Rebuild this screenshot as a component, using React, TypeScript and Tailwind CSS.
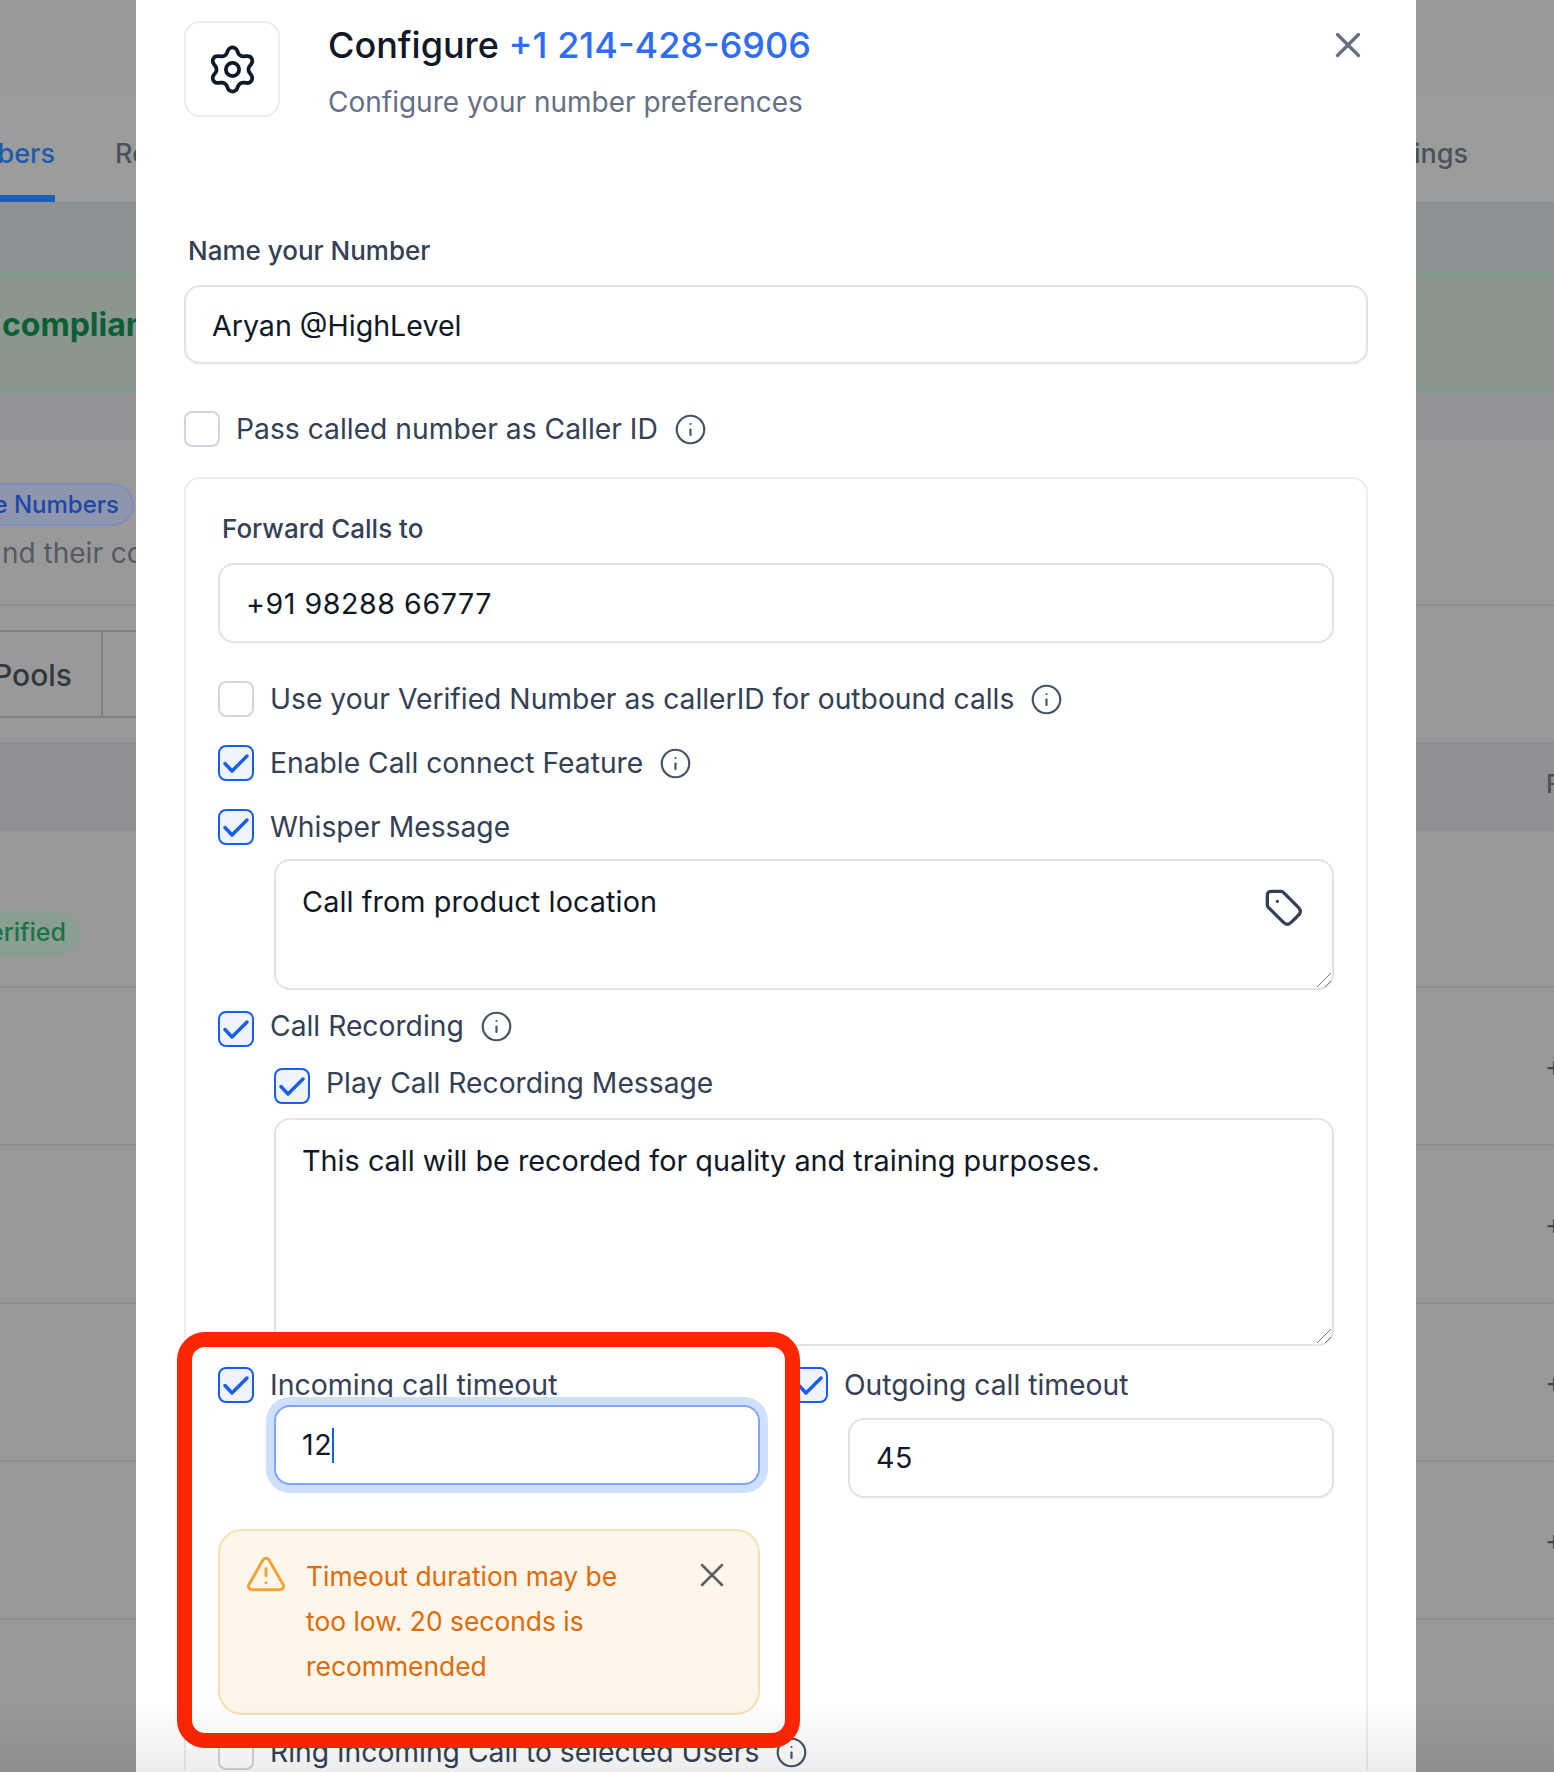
import React from "react";
import { Info, X, TriangleAlert } from "lucide-react";

const GEAR =
  "M9.3951 19.3711L9.97955 20.6856C10.1533 21.0768 10.4368 21.4093 10.7958 21.6426C11.1547 21.8759 11.5737 22.0001 12.0018 22C12.4299 22.0001 12.8488 21.8759 13.2078 21.6426C13.5667 21.4093 13.8503 21.0768 14.024 20.6856L14.6084 19.3711C14.8165 18.9047 15.1664 18.5159 15.6084 18.26C16.0532 18.0034 16.5678 17.8941 17.0784 17.9478L18.5084 18.1C18.9341 18.145 19.3637 18.0656 19.7451 17.8713C20.1265 17.6771 20.4434 17.3763 20.6573 17.0056C20.8715 16.635 20.9735 16.2103 20.9511 15.7829C20.9286 15.3555 20.7825 14.9438 20.5307 14.5978L19.684 13.4344C19.3825 13.0171 19.2214 12.5148 19.224 12C19.2239 11.4866 19.3865 10.9864 19.6884 10.5711L20.5351 9.40778C20.787 9.06175 20.933 8.65007 20.9555 8.22267C20.978 7.79528 20.8759 7.37054 20.6618 7C20.4479 6.62923 20.131 6.32849 19.7496 6.13423C19.3681 5.93997 18.9386 5.86053 18.5129 5.90556L17.0829 6.05778C16.5722 6.11141 16.0577 6.00212 15.6129 5.74556C15.17 5.48825 14.82 5.09736 14.6129 4.62889L14.024 3.31444C13.8503 2.92317 13.5667 2.59072 13.2078 2.3574C12.8488 2.12408 12.4299 1.99993 12.0018 2C11.5737 1.99993 11.1547 2.12408 10.7958 2.3574C10.4368 2.59072 10.1533 2.92317 9.97955 3.31444L9.3951 4.62889C9.18803 5.09736 8.83798 5.48825 8.3951 5.74556C7.95032 6.00212 7.43577 6.11141 6.9251 6.05778L5.49066 5.90556C5.06499 5.86053 4.6354 5.93997 4.25397 6.13423C3.87255 6.32849 3.55567 6.62923 3.34177 7C3.12766 7.37054 3.02562 7.79528 3.04803 8.22267C3.07045 8.65007 3.21652 9.06175 3.46844 9.40778L4.3151 10.5711C4.61704 10.9864 4.77964 11.4866 4.77955 12C4.77964 12.5134 4.61704 13.0137 4.3151 13.4289L3.46844 14.5922C3.21652 14.9382 3.07045 15.3499 3.04803 15.7773C3.02562 16.2047 3.12766 16.6295 3.34177 17C3.55589 17.3706 3.8728 17.6712 4.25417 17.8654C4.63554 18.0596 5.06502 18.1392 5.49066 18.0944L6.92066 17.9422C7.43133 17.8886 7.94587 17.9979 8.39066 18.2544C8.83519 18.511 9.18687 18.902 9.3951 19.3711Z";
const TAG =
  "M8 8H8.01M2 5.2L2 9.67C2 10.16 2 10.4 2.055 10.63C2.104 10.84 2.185 11.03 2.295 11.21C2.419 11.41 2.592 11.59 2.938 11.93L10.605 19.6C11.793 20.79 12.387 21.38 13.072 21.6C13.674 21.8 14.323 21.8 14.926 21.6C15.611 21.38 16.205 20.79 17.393 19.6L19.607 17.39C20.795 16.2 21.389 15.61 21.612 14.93C21.807 14.32 21.807 13.67 21.612 13.07C21.389 12.39 20.795 11.79 19.607 10.61L11.938 2.94C11.592 2.59 11.419 2.42 11.217 2.3C11.038 2.19 10.843 2.1 10.639 2.06C10.409 2 10.165 2 9.675 2H5.2C4.08 2 3.52 2 3.092 2.22C2.716 2.41 2.41 2.72 2.218 3.09C2 3.52 2 4.08 2 5.2Z";

function Box({ on = false }: { on?: boolean }) {
  return on ? (
    <span className="flex h-[36px] w-[36px] shrink-0 items-center justify-center rounded-[8px] border-2 border-[#155eef] bg-[#f0f3fb]">
      <svg width="26" height="19" viewBox="0 0 26 19" fill="none" stroke="#155eef" strokeWidth="3.4" strokeLinecap="round" strokeLinejoin="round">
        <path d="M2 9.5L9 17L24 2" />
      </svg>
    </span>
  ) : (
    <span className="block h-[36px] w-[36px] shrink-0 rounded-[8px] border-2 border-[#d0d5dd] bg-white" />
  );
}

function Tip() {
  return <Info size={33} strokeWidth={1.6} className="ml-[16px] shrink-0 text-[#475467]" />;
}

function Check({ on, label, tip, lift }: { on?: boolean; label: string; tip?: boolean; lift?: boolean }) {
  return (
    <div className="flex h-[36px] items-start">
      <Box on={on} />
      <div className={lift ? "ml-[16px] flex h-[36px] -translate-y-[3px] items-center" : "ml-[16px] flex h-[36px] items-center"}>
        <span className="whitespace-nowrap text-[28.25px] leading-[36px] text-[#344054]">{label}</span>
        {tip ? <Tip /> : null}
      </div>
    </div>
  );
}

function Field({ value, className }: { value: string; className: string }) {
  return (
    <div className={"flex items-center rounded-[16px] border-2 border-[#e2e3e8] bg-white pl-[26px] text-[28.6px] text-[#101828] shadow-[0_1px_2px_rgba(16,24,40,0.05)] " + className}>
      {value}
    </div>
  );
}

function Area({ value, className, icon }: { value: string; className: string; icon?: boolean }) {
  return (
    <div className={"relative rounded-[16px] border-2 border-[#e2e3e8] bg-white pl-[26px] pt-[23px] text-[28.8px] leading-[36px] text-[#101828] " + className}>
      {value}
      {icon ? (
        <svg width="40" height="40" viewBox="0 0 24 24" fill="none" stroke="#344054" strokeWidth="2" strokeLinecap="round" strokeLinejoin="round" className="absolute right-[28px] top-[27px]">
          <path d={TAG} />
        </svg>
      ) : null}
      <svg width="16" height="16" viewBox="0 0 16 16" fill="none" stroke="#777" strokeWidth="1" className="absolute bottom-0 right-0">
        <path d="M1 15L15 1M9 15L15 9" />
      </svg>
    </div>
  );
}

function Band({ h, className = "", children }: { h: string; className?: string; children?: React.ReactNode }) {
  return <div className={"relative overflow-hidden whitespace-nowrap " + h + " " + className}>{children}</div>;
}

const line = "border-b-[2px] border-[#8c8d90]";

function LeftStrip() {
  return (
    <div className="w-[136px] shrink-0 overflow-hidden bg-[#999999] text-[#4a4f57]">
      <Band h="h-[96px]" className="bg-[#999999] shadow-[0_2px_4px_rgba(0,0,0,0.12)]" />
      <Band h="h-[106px]" className="flex items-start bg-[#9c9c9c]">
        <div className="flex h-full w-[55px] shrink-0 flex-col items-end justify-between border-b-[7px] border-[#1b5fb4] pt-[40px]">
          <span className="text-[27px] font-medium leading-[36px] text-[#1c5cab]">bers</span>
        </div>
        <span className="ml-[60px] pt-[40px] text-[27px] font-medium leading-[36px] text-[#4b5158]">Re</span>
      </Band>
      <Band h="h-[72px]" className="bg-[#8f9294]" />
      <Band h="h-[117px]" className="flex items-start border-y-2 border-[#6fa283] bg-[#8b968f] pl-[2px] pt-[29px]">
        <span className="text-[32px] font-bold leading-[40px] text-[#0b5e35]">compliance</span>
      </Band>
      <Band h="h-[49px]" className="bg-[#929396]" />
      <Band h="h-[166px]" className={line + " bg-[#999999]"}>
        <div className="flex justify-end pr-[2px] pt-[43px]">
          <span className="flex h-[43px] items-center rounded-r-full border-2 border-l-0 border-[#7f8eb8] bg-[#8e96ae] pr-[13px] text-[24px] font-medium text-[#1d46a6]">
            e Numbers
          </span>
        </div>
        <div className="absolute left-[2px] top-[95px] text-[28px] leading-[36px] text-[#555a61]">nd their company</div>
      </Band>
      <Band h="h-[26px]" className="border-b-[2px] border-[#7f8083] bg-[#999999]" />
      <Band h="h-[86px]" className="flex items-center border-b-[2px] border-[#7f8083] bg-[#999999]">
        <div className="flex h-full w-[103px] items-center justify-end border-r-[2px] border-[#7f8083] pr-[29px] pt-[3px] text-[30px] font-medium text-[#33383f]">
          Pools
        </div>
      </Band>
      <Band h="h-[26px]" className={line + " bg-[#999999]"} />
      <Band h="h-[86px]" className={line + " bg-[#909194]"} />
      <Band h="h-[158px]" className={line + " bg-[#999999]"}>
        <div className="mt-[81px] flex h-[44px] w-[81px] items-center justify-end rounded-r-full bg-[#8a9f92] pr-[15px] text-[25px] font-medium text-[#1a7446]">
          erified
        </div>
      </Band>
      <Band h="h-[158px]" className={line} />
      <Band h="h-[158px]" className={line} />
      <Band h="h-[158px]" className={line} />
      <Band h="h-[158px]" className={line} />
      <Band h="h-[152px]" />
    </div>
  );
}

function Plus() {
  return <div className="ml-[129px] flex h-full items-center text-[28px] text-[#3a4453]">+</div>;
}

function RightStrip() {
  return (
    <div className="w-[138px] shrink-0 overflow-hidden bg-[#999999] text-[#4a4f57]">
      <Band h="h-[96px]" className="bg-[#999999] shadow-[0_2px_4px_rgba(0,0,0,0.12)]" />
      <Band h="h-[106px]" className="bg-[#9c9c9c]">
        <span className="absolute right-[86px] top-[40px] text-[27px] font-medium leading-[36px] text-[#4b5158]">Settings</span>
      </Band>
      <Band h="h-[72px]" className="bg-[#8f9294]" />
      <Band h="h-[117px]" className="border-y-2 border-[#6fa283] bg-[#8b968f]" />
      <Band h="h-[49px]" className="bg-[#929396]" />
      <Band h="h-[166px]" className={line} />
      <Band h="h-[138px]" className={line} />
      <Band h="h-[86px]" className={line + " bg-[#909194]"}>
        <span className="absolute left-[130px] top-[22px] text-[25px] font-medium text-[#4b5158]">Fo</span>
      </Band>
      <Band h="h-[158px]" className={line} />
      <Band h="h-[158px]" className={line}><Plus /></Band>
      <Band h="h-[158px]" className={line}><Plus /></Band>
      <Band h="h-[158px]" className={line}><Plus /></Band>
      <Band h="h-[158px]" className={line}><Plus /></Band>
      <Band h="h-[152px]" />
    </div>
  );
}

function Annotation() {
  return (
    <div className="absolute left-[41px] top-[1332px] h-[416px] w-[623px] rounded-[28px] border-[15px] border-[#ff2600] bg-white pl-[26px] pt-[20px]">
      <div className="flex h-[36px] items-start">
        <Box on />
        <div className="ml-[16px] h-[30px] overflow-hidden whitespace-nowrap text-[28.5px] leading-[36px] text-[#344054]">Incoming call timeout</div>
      </div>
      <div className="-mt-[6px] ml-[48px] w-[502px] rounded-[24px] bg-[#cfdffe] p-[8px]">
        <div className="flex h-[80px] items-center rounded-[16px] border-2 border-[#7ea6f8] bg-white pl-[26px] text-[28.6px] tracking-[0.5px] text-[#101828]">
          12<span className="h-[35px] w-[2px] bg-[#155eef]" />
        </div>
      </div>
      <div className="mt-[36px] flex h-[186px] w-[542px] rounded-[24px] border-2 border-[#f8dfb2] bg-[#fdf6ec] pl-[26px] pt-[22px]">
        <TriangleAlert size={42} strokeWidth={1.7} className="-ml-[1px] shrink-0 text-[#f2a332]" />
        <div className="ml-[19px] w-[345px] pt-[1px] text-[26.4px] leading-[45px] text-[#e06a06]">
          Timeout duration may be too low. 20 seconds is recommended
        </div>
        <X size={40} strokeWidth={1.5} className="ml-[41px] mt-[2px] shrink-0 text-[#5f5f5f]" />
      </div>
    </div>
  );
}

function Modal() {
  return (
    <div className="relative h-[1772px] w-[1280px] shrink-0 overflow-hidden bg-white px-[48px]">
      <div className="flex items-start pt-[21px]">
        <div className="flex h-[96px] w-[96px] shrink-0 items-center justify-center rounded-[16px] border-2 border-[#eaecf0] bg-white">
          <svg width="53" height="53" viewBox="0 0 24 24" fill="none" stroke="#101828" strokeWidth="1.7" strokeLinecap="round" strokeLinejoin="round">
            <path d={GEAR} />
            <circle cx="12" cy="12" r="3" />
          </svg>
        </div>
        <div className="ml-[48px] grow">
          <div className="mt-[2px] text-[36px] font-medium leading-[44px] text-[#101828]">
            Configure <span className="text-[#2f6df6]">+1 214-428-6906</span>
          </div>
          <div className="mt-[17px] text-[28px] leading-[36px] text-[#667085]">Configure your number preferences</div>
        </div>
        <X size={42} strokeWidth={1.9} className="mr-[-1px] mt-[3px] text-[#667085]" />
      </div>

      <div className="ml-[4px] mt-[113px] text-[26px] font-medium leading-[36px] text-[#344054]">Name your Number</div>
      <Field value="Aryan @HighLevel" className="mt-[16px] h-[79px] pt-[3px]" />
      <div className="mt-[47px]">
        <Check label="Pass called number as Caller ID" tip />
      </div>

      <div className="mt-[30px] rounded-t-[16px] border-2 border-b-0 border-[#eaecf0] px-[32px] pt-[32px]">
        <div className="ml-[4px] text-[26px] font-medium leading-[36px] text-[#344054]">Forward Calls to</div>
        <Field value="+91 98288 66777" className="mt-[16px] h-[80px] pt-[2px] tracking-[0.55px]" />
        <div className="mt-[38px]"><Check label="Use your Verified Number as callerID for outbound calls" tip /></div>
        <div className="mt-[28px]"><Check on label="Enable Call connect Feature" tip /></div>
        <div className="mt-[28px]"><Check on label="Whisper Message" /></div>
        <div className="ml-[56px] mt-[14px]">
          <Area value="Call from product location" icon className="h-[131px] tracking-[0.1px]" />
        </div>
        <div className="mt-[21px]"><Check on lift label="Call Recording" tip /></div>
        <div className="ml-[56px] mt-[21px]"><Check on lift label="Play Call Recording Message" /></div>
        <div className="ml-[56px] mt-[14px]">
          <Area value="This call will be recorded for quality and training purposes." className="h-[228px]" />
        </div>
        <div className="ml-[574px] mt-[21px]"><Check on label="Outgoing call timeout" /></div>
        <div className="ml-[630px] mt-[15px]">
          <Field value="45" className="h-[80px] tracking-[0.5px]" />
        </div>
        <div className="mt-[236px]"><Check label="Ring Incoming Call to selected Users" tip /></div>
      </div>

      <Annotation />
    </div>
  );
}

export default function App() {
  return (
    <div className="relative flex h-[1772px] w-[1554px] overflow-hidden font-['Inter',sans-serif]">
      <LeftStrip />
      <Modal />
      <RightStrip />
      <div className="pointer-events-none absolute bottom-0 left-0 right-0 h-[70px] bg-gradient-to-b from-transparent to-[rgba(0,0,0,0.07)]" />
    </div>
  );
}
